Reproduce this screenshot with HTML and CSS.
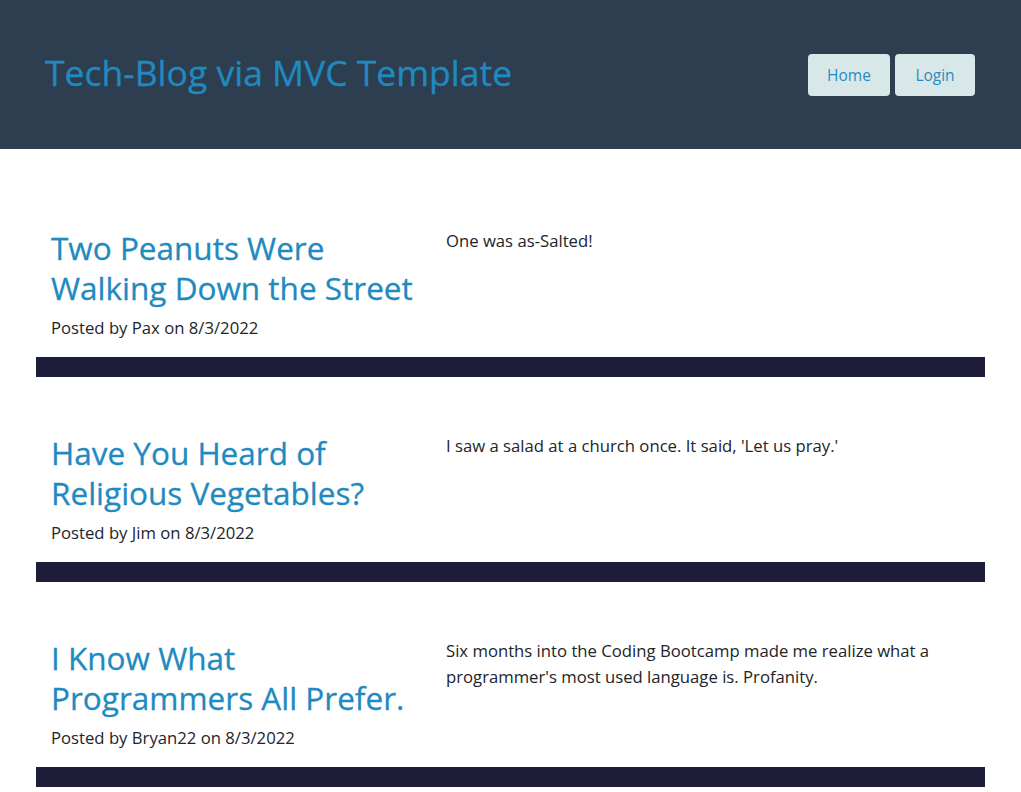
FILE: index.html
```html
<!DOCTYPE html>
<html lang="en">
<head>
<meta charset="utf-8">
<title>Tech-Blog via MVC Template</title>
<link rel="stylesheet" href="styles.css">
</head>
<body>
<header class="site-header">
  <h1 class="site-title">Tech-Blog via MVC Template</h1>
  <nav class="nav">
    <a class="nav-btn" href="#">Home</a>
    <a class="nav-btn" href="#">Login</a>
  </nav>
</header>
<main class="posts">
  <article class="post">
    <div class="post-row">
      <div class="post-left">
        <h2 class="post-title">Two Peanuts Were Walking Down the Street</h2>
        <p class="post-meta">Posted by Pax on 8/3/2022</p>
      </div>
      <div class="post-right">
        <p class="post-body">One was as-Salted!</p>
      </div>
    </div>
    <div class="post-bar"></div>
  </article>
  <article class="post">
    <div class="post-row">
      <div class="post-left">
        <h2 class="post-title">Have You Heard of Religious Vegetables?</h2>
        <p class="post-meta">Posted by Jim on 8/3/2022</p>
      </div>
      <div class="post-right">
        <p class="post-body">I saw a salad at a church once. It said, 'Let us pray.'</p>
      </div>
    </div>
    <div class="post-bar"></div>
  </article>
  <article class="post">
    <div class="post-row">
      <div class="post-left">
        <h2 class="post-title">I Know What Programmers All Prefer.</h2>
        <p class="post-meta">Posted by Bryan22 on 8/3/2022</p>
      </div>
      <div class="post-right">
        <p class="post-body">Six months into the Coding Bootcamp made me realize what a programmer's most used language is. Profanity.</p>
      </div>
    </div>
    <div class="post-bar"></div>
  </article>
</main>
</body>
</html>
```
FILE: styles.css
```css
* { box-sizing: border-box; }
body {
  margin: 0;
  font-family: "Open Sans", "Noto Sans", sans-serif;
  color: #212529;
  background: #fff;
}
.site-header {
  background: #2e3e51;
  height: 149px;
  padding: 0 46px 0 45px;
  display: flex;
  align-items: center;
  justify-content: space-between;
}
.site-title {
  margin: 0 0 4px;
  font-size: 35.5px;
  font-weight: 400;
  color: #1f8ac0;
  line-height: 1.2;
  -webkit-text-stroke: 0.3px #1f8ac0;
}
.nav {
  display: flex;
  gap: 5px;
}
.nav-btn {
  display: flex;
  align-items: center;
  justify-content: center;
  width: 82px;
  height: 42px;
  background: #d8e8e8;
  border-radius: 4px;
  color: #2a8ac4;
  font-size: 15.5px;
  text-decoration: none;
}
.nav-btn + .nav-btn { width: 80px; }
.posts {
  padding: 23px 36px 0;
}
.post-row {
  display: flex;
  padding-top: 56px;
}
.post-left {
  width: 395px;
  padding: 0 15px;
}
.post-right {
  flex: 1;
  padding: 0 15px;
}
.post-title {
  margin: 0 0 6px;
  font-size: 31.5px;
  font-weight: 400;
  line-height: 40px;
  color: #1f8ac0;
  -webkit-text-stroke: 0.3px #1f8ac0;
}
.post-meta {
  margin: 0 0 16px;
  font-size: 16.7px;
  line-height: 27px;
}
.post-body {
  margin: 0;
  font-size: 16.7px;
  line-height: 26px;
}
.post-bar {
  height: 20px;
  background: #1d1d3a;
}
```
